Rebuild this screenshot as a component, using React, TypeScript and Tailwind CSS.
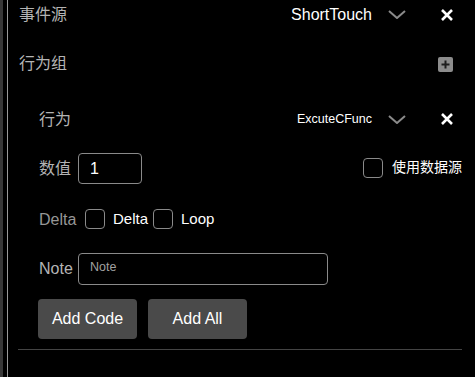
import React from "react";

const CJK = "font-['Liberation_Sans','Noto_Sans_CJK_SC',sans-serif]";

function Chevron() {
  return (
    <svg width="18" height="9" viewBox="0 0 18 9" className="shrink-0">
      <path d="M1 1 L9 8 L17 1" fill="none" stroke="#8a8a8a" strokeWidth="2" />
    </svg>
  );
}

function Close() {
  return (
    <svg width="12" height="12" viewBox="0 0 12 12" className="shrink-0">
      <path d="M1 1 L11 11 M11 1 L1 11" fill="none" stroke="#ffffff" strokeWidth="2.6" />
    </svg>
  );
}

function Checkbox() {
  return <div className="w-[20px] h-[20px] rounded-[4px] border border-[#8a8a8a] shrink-0" />;
}

export default function App() {
  return (
    <div className={`w-[475px] h-[377px] bg-black flex overflow-hidden ${CJK}`}>
      <div className="w-[3px] bg-[#383838] shrink-0" />
      <div className="w-[4px] shrink-0" />
      <div className="w-px bg-[#9a9a9a] shrink-0" />
      <div className="flex-1 flex flex-col pl-[10px] pr-[13px]">
        {/* 事件源 */}
        <div className="h-[28px] mt-px flex items-center justify-between">
          <span className="text-[16px] text-[#b4b4b4] pl-px">事件源</span>
          <div className="flex items-center mr-[9px] mt-[-1px]">
            <span className="text-[16px] text-white">ShortTouch</span>
            <div className="ml-[16px]"><Chevron /></div>
            <div className="ml-[35px]"><Close /></div>
          </div>
        </div>
        {/* 行为组 */}
        <div className="h-[28px] mt-[21px] flex items-center justify-between">
          <span className="text-[16px] text-[#b4b4b4] pl-px">行为组</span>
          <div className="w-[15px] h-[15px] rounded-[2px] bg-[#8c8c8c] flex items-center justify-center mr-[9px]">
            <svg width="9" height="9" viewBox="0 0 9 9">
              <path d="M4.5 0.5 V8.5 M0.5 4.5 H8.5" stroke="#1e1e1e" strokeWidth="2" />
            </svg>
          </div>
        </div>
        {/* group */}
        <div className="flex flex-col pl-[20px]">
          <div className="h-[28px] mt-[27px] flex items-center justify-between">
            <span className="text-[16px] text-[#b4b4b4] pl-px mt-px">行为</span>
            <div className="flex items-center mr-[9px]">
              <span className="text-[12.5px] text-white">ExcuteCFunc</span>
              <div className="ml-[16px]"><Chevron /></div>
              <div className="ml-[35px]"><Close /></div>
            </div>
          </div>
          <div className="h-[31px] mt-[20px] flex items-center justify-between">
            <div className="flex items-center">
              <span className="text-[16px] text-[#b4b4b4] pl-px w-[40px]">数值</span>
              <div className="w-[64px] h-[31px] rounded-[4px] border border-[#8a8a8a] flex items-center pl-[11px] text-[16px] text-white">
                1
              </div>
            </div>
            <div className="flex items-center mt-[-2px]">
              <Checkbox />
              <span className="ml-[9px] text-[14px] text-white">使用数据源</span>
            </div>
          </div>
          <div className="h-[20px] mt-[25px] flex items-center">
            <span className="text-[16px] text-[#969696] pl-px w-[47px] mt-px">Delta</span>
            <Checkbox />
            <span className="ml-[8px] text-[15px] text-white w-[40px] mt-px">Delta</span>
            <Checkbox />
            <span className="ml-[8px] text-[15px] text-white mt-px">Loop</span>
          </div>
          <div className="h-[32px] mt-[24px] flex items-center">
            <span className="text-[16px] text-[#b4b4b4] pl-px w-[40px]">Note</span>
            <div className="w-[250px] h-[32px] rounded-[4px] border border-[#8a8a8a] flex items-center pl-[11px] text-[12.5px] text-[#a0a0a0] pb-[3px]">
              Note
            </div>
          </div>
          <div className="mt-[14px] flex gap-[11px]">
            <button className="w-[99px] h-[40px] rounded-[4px] bg-[#4a4a4a] text-white text-[16px]">Add Code</button>
            <button className="w-[99px] h-[40px] rounded-[4px] bg-[#4a4a4a] text-white text-[16px]">Add All</button>
          </div>
        </div>
        <div className="h-px bg-[#444444] mt-[10px]" />
      </div>
    </div>
  );
}
